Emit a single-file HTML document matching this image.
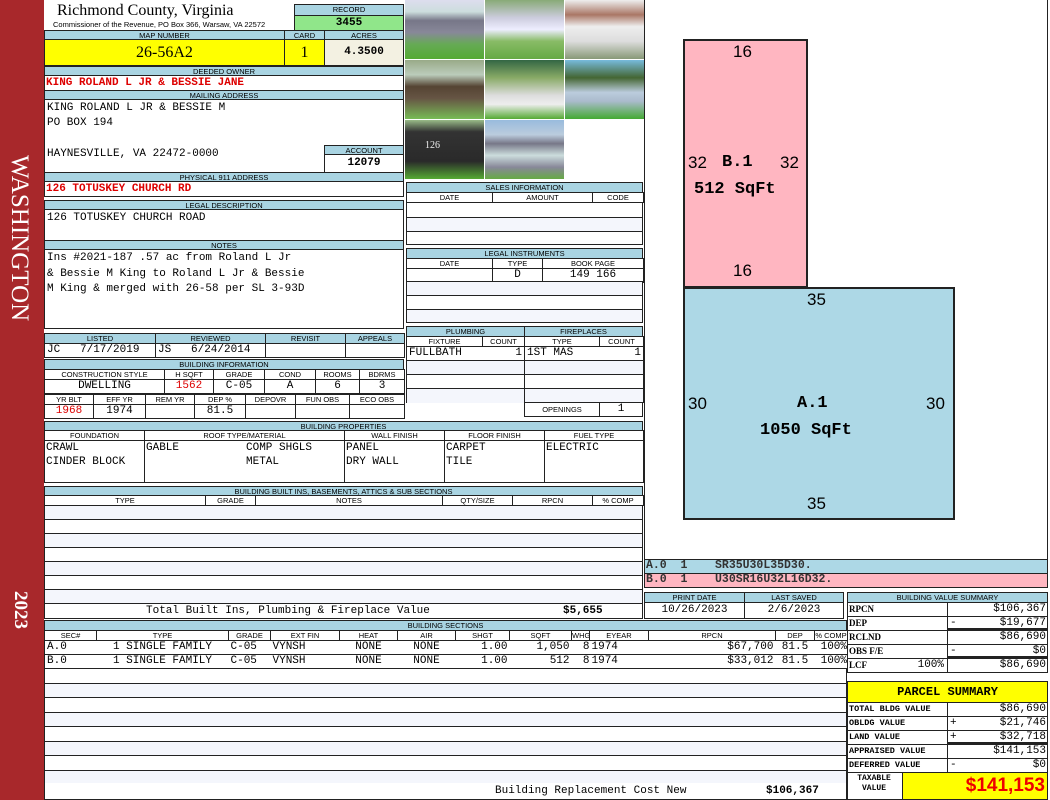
<!DOCTYPE html>
<html><head><meta charset="utf-8"><style>
*{margin:0;padding:0;box-sizing:border-box}
body{width:1050px;height:800px;position:relative;background:#fff;overflow:hidden;font-family:"Liberation Mono",monospace;color:#000}
.a{position:absolute}
.h{position:absolute;background:#a9d4e2;font:7.5px/9px "Liberation Sans",sans-serif;text-align:center;border:1px solid #222;white-space:nowrap;overflow:hidden}
.b{position:absolute;border:1px solid #222}
.m{position:absolute;font-family:"Liberation Mono",monospace;font-size:11px;line-height:14px;white-space:pre}
.r{color:#d00;font-weight:bold}
.c{text-align:center}.rt{text-align:right}
table{position:absolute;border-collapse:collapse;table-layout:fixed}
td{border:1px solid #222;padding:0 2px;overflow:hidden;white-space:nowrap}
.th td{background:#a9d4e2;font:7.5px/8px "Liberation Sans",sans-serif;text-align:center;height:10px}
.w td{background:#fff}
.v td{font:11px/13px "Liberation Mono",monospace;height:14px}
.nv td{border-left:0;border-right:0}
.ph{position:absolute;width:79px;height:59px}
</style></head><body>
<div class="a" style="left:0;top:0;width:44px;height:800px;background:#a8282b"></div>
<div class="a" style="left:32px;top:155px;transform-origin:0 0;transform:rotate(90deg);color:#fff;font:25px/25px 'Liberation Serif',serif;white-space:nowrap">WASHINGTON</div>
<div class="a" style="left:30px;top:591px;transform-origin:0 0;transform:rotate(90deg);color:#fff;font:bold 19px/19px 'Liberation Serif',serif">2023</div>

<div class="a" style="left:57px;top:2px;font:16px/18px 'Liberation Serif',serif">Richmond County, Virginia</div>
<div class="a" style="left:53px;top:20px;font:7.5px 'Liberation Sans',sans-serif;white-space:nowrap">Commissioner of the Revenue, PO Box 366, Warsaw, VA 22572</div>
<div class="h" style="left:294px;top:4px;width:110px;height:12px">RECORD</div>
<div class="b" style="left:294px;top:15px;width:110px;height:16px;background:#90e68a;font:bold 11px/14px 'Liberation Mono';text-align:center">3455</div>

<div class="h" style="left:44px;top:30px;width:241px;height:10px">MAP NUMBER</div>
<div class="h" style="left:284px;top:30px;width:41px;height:10px">CARD</div>
<div class="h" style="left:324px;top:30px;width:80px;height:10px">ACRES</div>
<div class="b" style="left:44px;top:39px;width:241px;height:27px;background:#ffff00;font:16px/25px 'Liberation Serif',serif;text-align:center">26-56A2</div>
<div class="b" style="left:284px;top:39px;width:41px;height:27px;background:#ffff00;font:16px/25px 'Liberation Serif',serif;text-align:center">1</div>
<div class="b" style="left:324px;top:39px;width:80px;height:27px;background:#f3f1e2;font:bold 11px/25px 'Liberation Mono';text-align:center">4.3500</div>

<div class="h" style="left:44px;top:66px;width:360px;height:10px">DEEDED OWNER</div>
<div class="b" style="left:44px;top:75px;width:360px;height:16px"></div>
<div class="m r" style="left:46px;top:76px">KING ROLAND L JR &amp; BESSIE JANE</div>
<div class="h" style="left:44px;top:90px;width:360px;height:10px">MAILING ADDRESS</div>
<div class="b" style="left:44px;top:99px;width:360px;height:74px"></div>
<div class="m" style="left:47px;top:101px;line-height:15px">KING ROLAND L JR &amp; BESSIE M
PO BOX 194</div>
<div class="m" style="left:47px;top:147px">HAYNESVILLE, VA 22472-0000</div>
<div class="h" style="left:324px;top:145px;width:80px;height:10px">ACCOUNT</div>
<div class="b" style="left:324px;top:154px;width:80px;height:19px;font:bold 11px/17px 'Liberation Mono';text-align:center">12079</div>
<div class="h" style="left:44px;top:172px;width:360px;height:10px">PHYSICAL 911 ADDRESS</div>
<div class="b" style="left:44px;top:181px;width:360px;height:16px"></div>
<div class="m r" style="left:46px;top:182px">126 TOTUSKEY CHURCH RD</div>

<div class="h" style="left:44px;top:200px;width:360px;height:10px">LEGAL DESCRIPTION</div>
<div class="b" style="left:44px;top:209px;width:360px;height:32px"></div>
<div class="m" style="left:47px;top:211px">126 TOTUSKEY CHURCH ROAD</div>
<div class="h" style="left:44px;top:240px;width:360px;height:10px">NOTES</div>
<div class="b" style="left:44px;top:249px;width:360px;height:80px"></div>
<div class="m" style="left:47px;top:251px;line-height:15.5px">Ins #2021-187 .57 ac from Roland L Jr
&amp; Bessie M King to Roland L Jr &amp; Bessie
M King &amp; merged with 26-58 per SL 3-93D</div>

<table style="left:44px;top:333px;width:360px">
<colgroup><col style="width:111px"><col style="width:110px"><col style="width:80px"><col style="width:59px"></colgroup>
<tr class="th"><td>LISTED</td><td>REVIEWED</td><td>REVISIT</td><td>APPEALS</td></tr>
<tr class="v"><td style="white-space:pre">JC   7/17/2019</td><td style="white-space:pre">JS   6/24/2014</td><td></td><td></td></tr></table>

<div class="h" style="left:44px;top:359px;width:360px;height:11px">BUILDING INFORMATION</div>
<table style="left:44px;top:369px;width:360px">
<colgroup><col style="width:120px"><col style="width:49px"><col style="width:51px"><col style="width:51px"><col style="width:44px"><col style="width:45px"></colgroup>
<tr class="th w"><td>CONSTRUCTION STYLE</td><td>H SQFT</td><td>GRADE</td><td>COND</td><td>ROOMS</td><td>BDRMS</td></tr>
<tr class="v"><td class="c">DWELLING</td><td class="c r">1562</td><td class="c">C-05</td><td class="c">A</td><td class="c">6</td><td class="c">3</td></tr></table>
<table style="left:44px;top:394px;width:360px">
<colgroup><col style="width:49px"><col style="width:52px"><col style="width:49px"><col style="width:51px"><col style="width:50px"><col style="width:54px"><col style="width:55px"></colgroup>
<tr class="th w"><td>YR BLT</td><td>EFF YR</td><td>REM YR</td><td>DEP %</td><td>DEPOVR</td><td>FUN OBS</td><td>ECO OBS</td></tr>
<tr class="v"><td class="c r">1968</td><td class="c">1974</td><td></td><td class="c">81.5</td><td></td><td></td><td></td></tr></table>

<!-- photos -->
<div class="ph" style="left:405px;top:0;background:linear-gradient(#dde 0,#cdd 20%,#778 35%,#889 55%,#6a5 75%,#5a3)"></div>
<div class="ph" style="left:485px;top:0;background:linear-gradient(#8a7 0,#ccd 30%,#eef 50%,#8b6 70%,#6a4)"></div>
<div class="ph" style="left:565px;top:0;background:linear-gradient(#eee 0,#a76 25%,#eee 45%,#ddd 70%,#897)"></div>
<div class="ph" style="left:405px;top:60px;background:linear-gradient(#9a8 0,#bcb 25%,#543 45%,#654 65%,#7b5)"></div>
<div class="ph" style="left:485px;top:60px;background:linear-gradient(#364 0,#8a6 30%,#ddd 60%,#eee 75%,#5a3)"></div>
<div class="ph" style="left:565px;top:60px;background:linear-gradient(#7bd 0,#463 30%,#bcd 55%,#abc 70%,#4a3)"></div>
<div class="ph" style="left:405px;top:120px;background:linear-gradient(#9b8 0,#333 20%,#2a2a2a 70%,#5a3)"></div>
<div class="a" style="left:425px;top:140px;color:#eee;font:10px 'Liberation Serif'">126</div>
<div class="ph" style="left:485px;top:120px;background:linear-gradient(#9bd 0,#bcd 25%,#778 40%,#cdd 60%,#889 80%,#6a4)"></div>

<div class="h" style="left:406px;top:182px;width:237px;height:11px">SALES INFORMATION</div>
<table style="left:406px;top:192px;width:237px">
<colgroup><col style="width:86px"><col style="width:100px"><col style="width:51px"></colgroup>
<tr class="th w"><td>DATE</td><td>AMOUNT</td><td>CODE</td></tr></table>
<div class="b" style="left:406px;top:202px;width:237px;height:43px;background:linear-gradient(#fff 0,#fff 14px,#222 14px,#222 15px,#f4f6fc 15px,#f4f6fc 28px,#222 28px,#222 29px,#fff 29px)"></div>
<div class="h" style="left:406px;top:248px;width:237px;height:11px">LEGAL INSTRUMENTS</div>
<table style="left:406px;top:258px;width:237px">
<colgroup><col style="width:86px"><col style="width:50px"><col style="width:101px"></colgroup>
<tr class="th w"><td>DATE</td><td>TYPE</td><td>BOOK PAGE</td></tr>
<tr class="v"><td></td><td class="c">D</td><td class="c">149 166</td></tr></table>
<div class="b" style="left:406px;top:281px;width:237px;height:42px;background:linear-gradient(#f4f6fc 0,#f4f6fc 13px,#222 13px,#222 14px,#fff 14px,#fff 27px,#222 27px,#222 28px,#f4f6fc 28px)"></div>

<div class="h" style="left:406px;top:326px;width:119px;height:11px">PLUMBING</div>
<div class="h" style="left:524px;top:326px;width:119px;height:11px">FIREPLACES</div>
<table style="left:406px;top:336px;width:237px">
<colgroup><col style="width:76px"><col style="width:42px"><col style="width:75px"><col style="width:44px"></colgroup>
<tr class="th w"><td>FIXTURE</td><td>COUNT</td><td>TYPE</td><td>COUNT</td></tr>
<tr class="v"><td style="border-right:0">FULLBATH</td><td class="rt" style="border-left:0">1</td><td style="border-right:0">1ST MAS</td><td class="rt" style="border-left:0">1</td></tr>
<tr class="v"><td colspan="2" style="background:#f4f6fc"></td><td colspan="2" style="background:#f4f6fc"></td></tr>
<tr class="v"><td colspan="2"></td><td colspan="2"></td></tr>
<tr class="v"><td colspan="2" style="background:#f4f6fc;border-bottom:0"></td><td colspan="2" style="background:#f4f6fc"></td></tr>
</table>
<div class="b" style="left:524px;top:402px;width:76px;height:15px;font:7.5px/13px 'Liberation Sans';text-align:center">OPENINGS</div>
<div class="b" style="left:599px;top:402px;width:44px;height:15px;font:11px/13px 'Liberation Mono';text-align:center">1</div>

<div class="h" style="left:44px;top:421px;width:599px;height:10px">BUILDING PROPERTIES</div>
<table style="left:44px;top:430px;width:599px">
<colgroup><col style="width:100px"><col style="width:200px"><col style="width:100px"><col style="width:100px"><col style="width:99px"></colgroup>
<tr class="th w"><td>FOUNDATION</td><td>ROOF TYPE/MATERIAL</td><td>WALL FINISH</td><td>FLOOR FINISH</td><td>FUEL TYPE</td></tr>
<tr><td style="height:42px"></td><td></td><td></td><td></td><td></td></tr></table>
<div class="m" style="left:46px;top:441px">CRAWL
CINDER BLOCK</div>
<div class="m" style="left:146px;top:441px">GABLE</div>
<div class="m" style="left:246px;top:441px">COMP SHGLS
METAL</div>
<div class="m" style="left:346px;top:441px">PANEL
DRY WALL</div>
<div class="m" style="left:446px;top:441px">CARPET
TILE</div>
<div class="m" style="left:546px;top:441px">ELECTRIC</div>

<div class="h" style="left:44px;top:486px;width:599px;height:10px">BUILDING BUILT INS, BASEMENTS, ATTICS &amp; SUB SECTIONS</div>
<table style="left:44px;top:495px;width:599px">
<colgroup><col style="width:161px"><col style="width:50px"><col style="width:187px"><col style="width:70px"><col style="width:80px"><col style="width:51px"></colgroup>
<tr class="th w"><td>TYPE</td><td>GRADE</td><td>NOTES</td><td>QTY/SIZE</td><td>RPCN</td><td>% COMP</td></tr></table>
<div class="b" style="left:44px;top:505px;width:599px;height:114px;background:repeating-linear-gradient(#f4f6fc 0,#f4f6fc 13px,#222 13px,#222 14px,#fff 14px,#fff 27px,#222 27px,#222 28px)"></div>
<div class="b" style="left:44px;top:603px;width:599px;height:16px;background:#fff"></div>
<div class="m" style="left:146px;top:604px">Total Built Ins, Plumbing &amp; Fireplace Value</div>
<div class="m" style="left:563px;top:604px;font-weight:bold">$5,655</div>

<table style="left:644px;top:592px;width:199px">
<colgroup><col style="width:100px"><col style="width:99px"></colgroup>
<tr class="th"><td>PRINT DATE</td><td>LAST SAVED</td></tr>
<tr class="v"><td class="c" style="height:16px">10/26/2023</td><td class="c">2/6/2023</td></tr></table>

<div class="h" style="left:44px;top:620px;width:803px;height:11px">BUILDING SECTIONS</div>
<div class="b" style="left:44px;top:640px;width:803px;height:160px;background:repeating-linear-gradient(#fff 0,#fff 14px,#222 14px,#222 15px,#f4f6fc 15px,#f4f6fc 28px,#222 28px,#222 29px);background-position:0 -1px"></div>
<table style="left:44px;top:630px;width:803px;background:#fff;border-left:1px solid #222;border-right:1px solid #222">
<colgroup><col style="width:52px"><col style="width:132px"><col style="width:42px"><col style="width:69px"><col style="width:58px"><col style="width:58px"><col style="width:54px"><col style="width:62px"><col style="width:18px"><col style="width:59px"><col style="width:127px"><col style="width:39px"><col style="width:33px"></colgroup>
<tr class="th w"><td>SEC#</td><td>TYPE</td><td>GRADE</td><td>EXT FIN</td><td>HEAT</td><td>AIR</td><td>SHGT</td><td>SQFT</td><td style="padding:0">WHGT</td><td>EYEAR</td><td>RPCN</td><td>DEP</td><td style="padding:0">% COMP</td></tr>
<tr class="v nv"><td>A.0</td><td class="c">1 SINGLE FAMILY</td><td>C-05</td><td>VYNSH</td><td class="c">NONE</td><td class="c">NONE</td><td class="rt">1.00</td><td class="rt">1,050</td><td class="rt" style="padding:0">8</td><td>1974</td><td class="rt">$67,700</td><td class="c">81.5</td><td class="rt" style="padding:0">100%</td></tr>
<tr class="v nv"><td>B.0</td><td class="c">1 SINGLE FAMILY</td><td>C-05</td><td>VYNSH</td><td class="c">NONE</td><td class="c">NONE</td><td class="rt">1.00</td><td class="rt">512</td><td class="rt" style="padding:0">8</td><td>1974</td><td class="rt">$33,012</td><td class="c">81.5</td><td class="rt" style="padding:0">100%</td></tr>
</table>
<div class="a" style="left:45px;top:783px;width:801px;height:16px;background:#fff"></div>
<div class="m" style="left:495px;top:784px">Building Replacement Cost New</div>
<div class="m" style="left:766px;top:784px;font-weight:bold">$106,367</div>

<!-- sketch -->
<div class="b" style="left:644px;top:0;width:404px;height:560px;border-top:0"></div>
<div class="a" style="left:683px;top:39px;width:125px;height:249px;background:#ffb6c1;border:2px solid #222"></div>
<div class="a" style="left:683px;top:287px;width:272px;height:233px;background:#add8e6;border:2px solid #222"></div>
<div class="a" style="left:733px;top:42px;font:17px 'Liberation Sans'">16</div>
<div class="a" style="left:733px;top:261px;font:17px 'Liberation Sans'">16</div>
<div class="a" style="left:688px;top:153px;font:17px 'Liberation Sans'">32</div>
<div class="a" style="left:780px;top:153px;font:17px 'Liberation Sans'">32</div>
<div class="a" style="left:722px;top:153px;font:bold 17px 'Liberation Mono'">B.1</div>
<div class="a" style="left:694px;top:180px;font:bold 17px 'Liberation Mono';white-space:pre">512 SqFt</div>
<div class="a" style="left:807px;top:290px;font:17px 'Liberation Sans'">35</div>
<div class="a" style="left:807px;top:494px;font:17px 'Liberation Sans'">35</div>
<div class="a" style="left:688px;top:394px;font:17px 'Liberation Sans'">30</div>
<div class="a" style="left:926px;top:394px;font:17px 'Liberation Sans'">30</div>
<div class="a" style="left:797px;top:394px;font:bold 17px 'Liberation Mono'">A.1</div>
<div class="a" style="left:760px;top:421px;font:bold 17px 'Liberation Mono';white-space:pre">1050 SqFt</div>
<div class="b" style="left:644px;top:559px;width:404px;height:15px;background:#add8e6"></div>
<div class="b" style="left:644px;top:573px;width:404px;height:15px;background:#ffb6c1"></div>
<div class="m" style="left:646px;top:559px;font-size:11.5px;font-weight:bold;color:#333">A.0  1    SR35U30L35D30.</div>
<div class="m" style="left:646px;top:573px;font-size:11.5px;font-weight:bold;color:#333">B.0  1    U30SR16U32L16D32.</div>

<!-- value summary -->
<div class="h" style="left:847px;top:592px;width:201px;height:11px">BUILDING VALUE SUMMARY</div>
<div class="b" style="left:847px;top:602px;width:201px;height:71px;background:repeating-linear-gradient(#fff 0,#fff 13px,#222 13px,#222 14px)"></div>
<div class="a" style="left:947px;top:602px;width:1px;height:71px;background:#222"></div>
<div class="a" style="left:947px;top:628px;width:101px;height:2px;background:#222"></div>
<div class="a" style="left:947px;top:656px;width:101px;height:2px;background:#222"></div>
<div class="m" style="left:849px;top:602px;font-size:9px;font-family:'Liberation Serif';font-weight:bold;line-height:14px">RPCN
DEP
RCLND
OBS F/E
LCF</div>
<div class="m rt" style="left:880px;top:658px;width:64px;font-size:11px">100%</div>
<div class="m rt" style="left:950px;top:602px;width:96px;line-height:14px">$106,367
$19,677
$86,690
$0
$86,690</div>
<div class="m" style="left:950px;top:616px">-</div>
<div class="m" style="left:950px;top:644px">-</div>

<div class="b" style="left:847px;top:681px;width:201px;height:22px;background:#ffff00;font:bold 12px/20px 'Liberation Mono';text-align:center">PARCEL SUMMARY</div>
<div class="b" style="left:847px;top:702px;width:201px;height:71px;background:repeating-linear-gradient(#fff 0,#fff 13px,#222 13px,#222 14px)"></div>
<div class="a" style="left:947px;top:702px;width:1px;height:71px;background:#222"></div>
<div class="a" style="left:947px;top:742px;width:101px;height:2px;background:#222"></div>
<div class="m" style="left:849px;top:702px;font-size:8.5px;font-family:'Liberation Mono';font-weight:bold;line-height:14px">TOTAL BLDG VALUE
OBLDG VALUE
LAND VALUE
APPRAISED VALUE
DEFERRED VALUE</div>
<div class="m rt" style="left:950px;top:702px;width:96px;line-height:14px">$86,690
$21,746
$32,718
$141,153
$0</div>
<div class="m" style="left:950px;top:716px;line-height:14px">+
+

-</div>
<div class="b" style="left:847px;top:772px;width:201px;height:28px"></div>
<div class="a" style="left:849px;top:774px;font:bold 8px/10px 'Liberation Mono';text-align:center;width:50px">TAXABLE<br>VALUE</div>
<div class="a" style="left:902px;top:772px;width:146px;height:28px;background:#ffff00;border:1px solid #222;color:#e00;font:bold 19px/26px 'Liberation Sans';text-align:right;padding-right:2px">$141,153</div>
</body></html>
